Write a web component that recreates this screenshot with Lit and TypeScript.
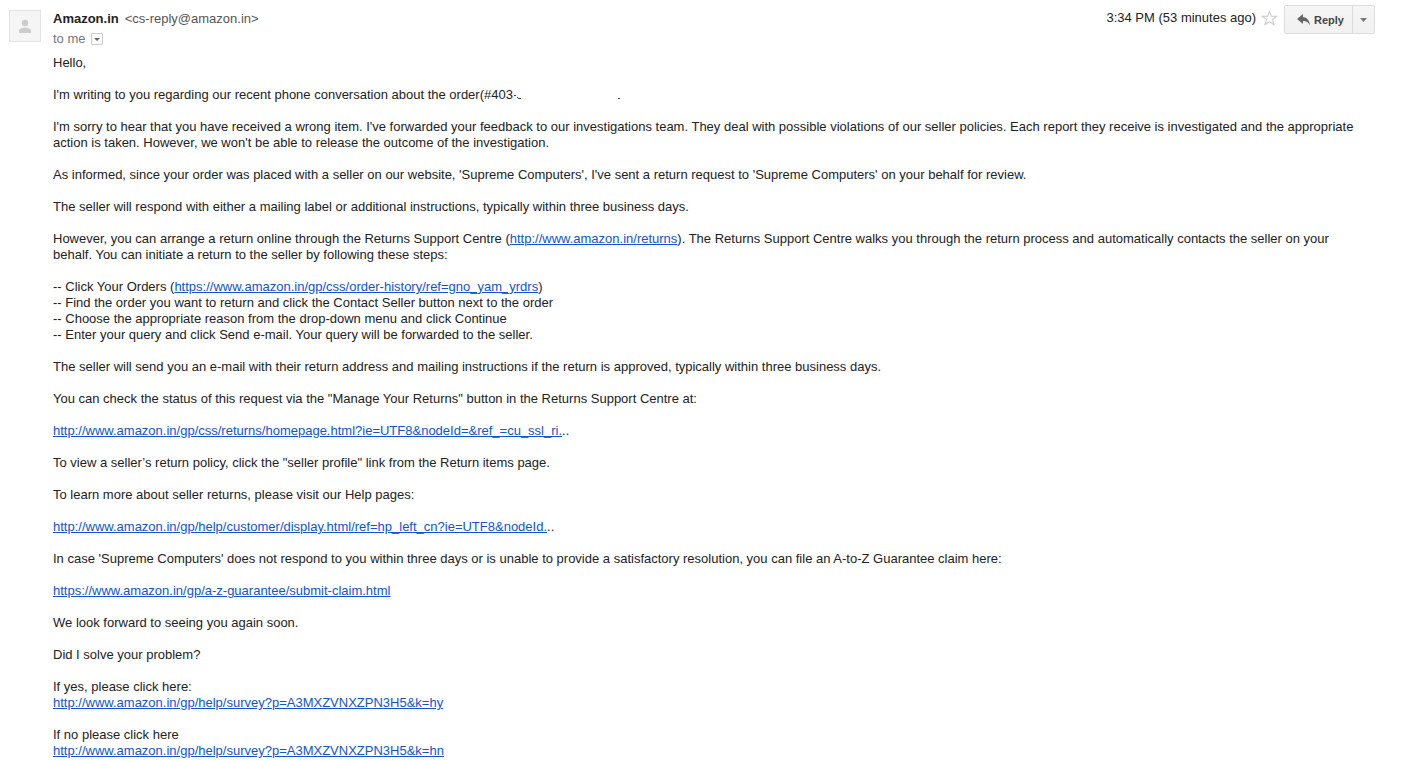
import { LitElement, html, css } from "lit";
import { customElement, property } from "lit/decorators.js";

@customElement("mail-header")
export class MailHeader extends LitElement {
  @property() sender = "";
  @property() address = "";
  @property() time = "";

  static styles = css`
    :host { display: flex; justify-content: space-between; align-items: flex-start; }
    .who { padding-top: 6px; }
    .from, .to { display: flex; align-items: center; }
    .from { gap: 6px; height: 16px; color: #555; }
    .name { font-size: 13px; font-weight: bold; color: #222; margin: 0; }
    .to { gap: 5px; height: 16px; margin-top: 4px; color: #777; }
    .actions { display: flex; align-items: flex-start; }
    .time, .star { margin-top: 5px; }
    button { font-family: inherit; margin: 0; padding: 0; cursor: pointer; }
    .details { display: grid; place-items: center; width: 12px; height: 12px; background: #fff; border: 1px solid #ccc; border-radius: 1px; }
    .star { display: block; background: none; border: 0; margin-left: 5px; margin-right: 6px; width: 17px; height: 16px; }
    .split { display: flex; height: 29px; box-sizing: border-box; border: 1px solid #dcdcdc; border-radius: 2px; background: linear-gradient(#f5f5f5, #f1f1f1); }
    .reply { display: flex; align-items: center; gap: 4px; padding: 0 8px 0 12px; border: 0; background: none; color: #444; font-size: 11px; font-weight: bold; }
    .more { display: grid; place-items: center; width: 22px; border: 0; border-left: 1px solid #dcdcdc; background: none; }
    svg { display: block; }
  `;

  render() {
    return html`
      <div class="who">
        <div class="from"><h1 class="name">${this.sender}</h1><span>&lt;${this.address}&gt;</span></div>
        <div class="to"><span>to me</span>
          <button class="details" aria-label="Show details">
            <svg width="6" height="3" viewBox="0 0 6 3"><path d="M0 0h6L3 3z" fill="#666" /></svg>
          </button>
        </div>
      </div>
      <div class="actions">
        <time class="time">${this.time}</time>
        <button class="star" aria-label="Star">
          <svg width="17" height="16" viewBox="0 0 17 16"><path d="M8.5 1.2l1.9 4.9 5.2.2-4.1 3.2 1.4 5-4.4-2.8-4.4 2.8 1.4-5-4.1-3.2 5.2-.2z" fill="#fff" stroke="#ccc" stroke-width="1.1" /></svg>
        </button>
        <div class="split">
          <button class="reply">
            <svg width="13" height="12" viewBox="0 0 13 12"><path d="M0 5L6 0v3c4 .3 6.600 3.500 7 8.500C11.500 8.300 9.500 7 6 7v3z" fill="#666" /></svg>
            Reply
          </button>
          <button class="more" aria-label="More options">
            <svg width="7" height="4" viewBox="0 0 7 4"><path d="M0 0h7L3.500 4z" fill="#777" /></svg>
          </button>
        </div>
      </div>`;
  }
}

@customElement("app-root")
export class AppRoot extends LitElement {
  static styles = css`
    :host { display: block; background: #fff; color: #222; font: 13px/16px "Liberation Sans", Arial, sans-serif; }
    .message { display: grid; grid-template-columns: 32px minmax(0, 1fr); column-gap: 12px; padding: 5px 35px 0 9px; }
    .avatar { width: 30px; height: 30px; margin-top: 5px; border: 1px solid #e2e2e2; background: #f5f5f5; }
    .avatar svg { display: block; }
    .body { grid-column: 2; margin-top: 8px; padding-right: 12px; }
    p { margin: 0 0 16px; }
    p:last-child { margin-bottom: 0; }
    a { color: #15c; text-decoration: underline; }
    .erased { vertical-align: bottom; }
  `;

  private link(url: string) {
    return html`<a href=${url}>${url}</a>`;
  }

  render() {
    return html`
      <article class="message">
        <div class="avatar">
          <svg width="30" height="30" viewBox="0 0 30 30" fill="#ccc"><circle cx="15" cy="12" r="3.200" /><path d="M9 22v-2c0-2 3-3.200 6-3.200s6 1.200 6 3.200v2z" /></svg>
        </div>
        <mail-header sender="Amazon.in" address="cs-reply@amazon.in" time="3:34 PM (53 minutes ago)"></mail-header>
        <div class="body">
          <p>Hello,</p>
          <p>I'm writing to you regarding our recent phone conversation about the order(#403<svg class="erased" width="110" height="16" viewBox="0 0 110 16"><path d="M1 8h2v1H1zM4 10h1v1H4zM5 11h3v1H5zM105 11h2v1h-2z" fill="#444" /></svg></p>
          <p>I'm sorry to hear that you have received a wrong item. I've forwarded your feedback to our investigations team. They deal with possible violations of our seller policies. Each report they receive is investigated and the appropriate action is taken. However, we won't be able to release the outcome of the investigation.</p>
          <p>As informed, since your order was placed with a seller on our website, 'Supreme Computers', I've sent a return request to 'Supreme Computers' on your behalf for review.</p>
          <p>The seller will respond with either a mailing label or additional instructions, typically within three business days.</p>
          <p>However, you can arrange a return online through the Returns Support Centre (${this.link("http://www.amazon.in/returns")}). The Returns Support Centre walks you through the return process and automatically contacts the seller on your behalf. You can initiate a return to the seller by following these steps:</p>
          <p>
            -- Click Your Orders (${this.link("https://www.amazon.in/gp/css/order-history/ref=gno_yam_yrdrs")})<br />
            -- Find the order you want to return and click the Contact Seller button next to the order<br />
            -- Choose the appropriate reason from the drop-down menu and click Continue<br />
            -- Enter your query and click Send e-mail. Your query will be forwarded to the seller.
          </p>
          <p>The seller will send you an e-mail with their return address and mailing instructions if the return is approved, typically within three business days.</p>
          <p>You can check the status of this request via the "Manage Your Returns" button in the Returns Support Centre at:</p>
          <p>${this.link("http://www.amazon.in/gp/css/returns/homepage.html?ie=UTF8&nodeId=&ref_=cu_ssl_ri.")}..</p>
          <p>To view a seller’s return policy, click the "seller profile" link from the Return items page.</p>
          <p>To learn more about seller returns, please visit our Help pages:</p>
          <p>${this.link("http://www.amazon.in/gp/help/customer/display.html/ref=hp_left_cn?ie=UTF8&nodeId.")}..</p>
          <p>In case 'Supreme Computers' does not respond to you within three days or is unable to provide a satisfactory resolution, you can file an A-to-Z Guarantee claim here:</p>
          <p>${this.link("https://www.amazon.in/gp/a-z-guarantee/submit-claim.html")}</p>
          <p>We look forward to seeing you again soon.</p>
          <p>Did I solve your problem?</p>
          <p>If yes, please click here:<br />${this.link("http://www.amazon.in/gp/help/survey?p=A3MXZVNXZPN3H5&k=hy")}</p>
          <p>If no please click here<br />${this.link("http://www.amazon.in/gp/help/survey?p=A3MXZVNXZPN3H5&k=hn")}</p>
        </div>
      </article>`;
  }
}
